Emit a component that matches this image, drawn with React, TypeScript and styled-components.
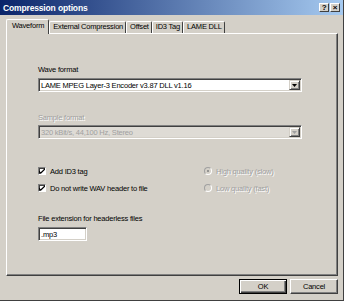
import React from 'react'
import styled, { createGlobalStyle, css } from 'styled-components'

const GlobalStyle = createGlobalStyle`
  html, body {
    margin: 0;
    padding: 0;
    background: #d4d0c8;
  }
  body {
    font-family: 'Liberation Sans', Arial, sans-serif;
    font-size: 7.5px;
    letter-spacing: -0.2px;
    color: #000;
  }
`

const Window = styled.div`
  width: 344px;
  height: 301px;
  box-sizing: border-box;
  background: #d4d0c8;
  border-right: 1px solid #404040;
  border-bottom: 1px solid #404040;
  display: flex;
  flex-direction: column;
`

const TitleBar = styled.div`
  height: 15px;
  flex: none;
  display: flex;
  align-items: center;
  justify-content: space-between;
  padding: 0 3px 0 3px;
  background: linear-gradient(to right, #0a246a, #a6caf0);
  color: #fff;
  font-weight: bold;
  font-size: 8.5px;
  letter-spacing: -0.15px;
`

const CaptionButtons = styled.div`
  display: flex;
  gap: 1px;
`

const CaptionButton = styled.div`
  width: 10px;
  height: 9px;
  box-sizing: border-box;
  background: #d4d0c8;
  border-top: 1px solid #fff;
  border-left: 1px solid #fff;
  border-right: 1px solid #404040;
  border-bottom: 1px solid #404040;
  color: #000;
  font-size: 8px;
  font-weight: bold;
  line-height: 7px;
  text-align: center;
`

const Body = styled.div`
  flex: 1;
  display: flex;
  flex-direction: column;
  padding: 4px 5px 0 6px;
`

const TabRow = styled.div`
  display: flex;
  align-items: flex-end;
  height: 14px;
  position: relative;
  z-index: 1;
`

const Tab = styled.div<{ $active?: boolean }>`
  box-sizing: border-box;
  height: 12px;
  padding: 0 2px 0 3px;
  line-height: 10px;
  background: #d4d0c8;
  border-top: 1px solid #fff;
  border-left: 1px solid #fff;
  border-right: 1px solid #404040;
  border-radius: 2px 2px 0 0;
  white-space: nowrap;
  ${(p) =>
    p.$active &&
    css`
      height: 15px;
      margin-bottom: -1px;
      padding: 0 4px 0 5px;
      line-height: 12px;
    `}
`

const Panel = styled.div`
  flex: none;
  height: 243px;
  box-sizing: border-box;
  border-top: 1px solid #fff;
  border-left: 1px solid #fff;
  border-right: 1px solid #404040;
  border-bottom: 1px solid #404040;
  box-shadow: inset -1px -1px 0 #808080;
  padding: 31px 0 0 31px;
  display: flex;
  flex-direction: column;
  align-items: flex-start;
`

const Label = styled.div<{ $disabled?: boolean; $gap?: number }>`
  line-height: 10px;
  height: 10px;
  margin-top: ${(p) => p.$gap ?? 0}px;
  ${(p) =>
    p.$disabled &&
    css`
      color: #a0a0a0;
      text-shadow: 1px 1px 0 #fff;
    `}
`

const Sunken = styled.div<{ $disabled?: boolean; $width: number; $gap?: number }>`
  box-sizing: border-box;
  width: ${(p) => p.$width}px;
  height: 14px;
  margin-top: ${(p) => p.$gap ?? 0}px;
  border-top: 1px solid #808080;
  border-left: 1px solid #808080;
  border-right: 1px solid #fff;
  border-bottom: 1px solid #fff;
  box-shadow: inset 1px 1px 0 #404040, inset -1px -1px 0 #d4d0c8;
  background: ${(p) => (p.$disabled ? '#dedbd5' : '#fff')};
  color: ${(p) => (p.$disabled ? '#a0a0a0' : '#000')};
  display: flex;
  align-items: center;
  padding-left: 2px;
  white-space: nowrap;
`

const SelectText = styled.span`
  flex: 1;
`

const DropButton = styled.div<{ $disabled?: boolean }>`
  width: 11px;
  height: 10px;
  margin-right: 1px;
  box-sizing: border-box;
  background: #d4d0c8;
  border-top: 1px solid #d4d0c8;
  border-left: 1px solid #d4d0c8;
  border-right: 1px solid #404040;
  border-bottom: 1px solid #404040;
  box-shadow: inset 1px 1px 0 #fff, inset -1px -1px 0 #808080;
  display: flex;
  align-items: center;
  justify-content: center;
  color: ${(p) => (p.$disabled ? '#a0a0a0' : '#000')};
`

const Options = styled.div`
  display: grid;
  grid-template-columns: 166px auto;
  row-gap: 7px;
  margin-top: 27px;
`

const Option = styled.div<{ $disabled?: boolean }>`
  display: flex;
  align-items: center;
  gap: 4px;
  height: 10px;
  white-space: nowrap;
  ${(p) =>
    p.$disabled &&
    css`
      color: #a0a0a0;
      text-shadow: 1px 1px 0 #fff;
    `}
`

const CheckBox = styled.div`
  width: 8px;
  height: 8px;
  box-sizing: border-box;
  background: #fff;
  border-top: 1px solid #808080;
  border-left: 1px solid #808080;
  border-right: 1px solid #fff;
  border-bottom: 1px solid #fff;
  box-shadow: inset 1px 1px 0 #404040;
  display: flex;
  align-items: center;
  justify-content: center;
`

const Radio = styled.div<{ $checked?: boolean }>`
  width: 8px;
  height: 8px;
  box-sizing: border-box;
  border-radius: 50%;
  border: 1px solid #a0a0a0;
  border-right-color: #fff;
  border-bottom-color: #fff;
  background: #d4d0c8;
  display: flex;
  align-items: center;
  justify-content: center;
  &::after {
    content: '';
    width: 2px;
    height: 2px;
    border-radius: 50%;
    background: ${(p) => (p.$checked ? '#808080' : 'transparent')};
  }
`

const Footer = styled.div`
  flex: 1;
  display: flex;
  justify-content: flex-end;
  align-items: flex-start;
  gap: 3px;
  padding-top: 3px;
`

const Button = styled.div<{ $default?: boolean }>`
  width: 48px;
  height: 15px;
  box-sizing: border-box;
  background: #d4d0c8;
  border-top: 1px solid #fff;
  border-left: 1px solid #fff;
  border-right: 1px solid #404040;
  border-bottom: 1px solid #404040;
  box-shadow: inset -1px -1px 0 #808080;
  display: flex;
  align-items: center;
  justify-content: center;
  ${(p) =>
    p.$default &&
    css`
      border: 1px solid #000;
      box-shadow: inset 1px 1px 0 #fff, inset -1px -1px 0 #404040, inset -2px -2px 0 #808080;
    `}
`

const Arrow = () => (
  <svg width="5" height="3" viewBox="0 0 5 3">
    <path d="M0 0h5L2.5 3z" fill="currentColor" />
  </svg>
)

const Check = () => (
  <svg width="6" height="6" viewBox="0 0 7 7">
    <path d="M0 3l2 2 5-5v2l-5 5-2-2z" fill="#000" />
  </svg>
)

const tabs = ['Waveform', 'External Compression', 'Offset', 'ID3 Tag', 'LAME DLL']

export default function App() {
  return (
    <>
      <GlobalStyle />
      <Window>
        <TitleBar>
          <span>Compression options</span>
          <CaptionButtons>
            <CaptionButton>?</CaptionButton>
            <CaptionButton>×</CaptionButton>
          </CaptionButtons>
        </TitleBar>
        <Body>
          <TabRow>
            {tabs.map((t, i) => (
              <Tab key={t} $active={i === 0}>
                {t}
              </Tab>
            ))}
          </TabRow>
          <Panel>
            <Label>Wave format</Label>
            <Sunken $width={264} $gap={3}>
              <SelectText>LAME MPEG Layer-3 Encoder v3.87 DLL v1.16</SelectText>
              <DropButton>
                <Arrow />
              </DropButton>
            </Sunken>
            <Label $disabled $gap={21}>
              Sample format
            </Label>
            <Sunken $disabled $width={264} $gap={2}>
              <SelectText>320 kBit/s, 44,100 Hz, Stereo</SelectText>
              <DropButton $disabled>
                <Arrow />
              </DropButton>
            </Sunken>
            <Options>
              <Option>
                <CheckBox>
                  <Check />
                </CheckBox>
                Add ID3 tag
              </Option>
              <Option $disabled>
                <Radio $checked />
                High quality (slow)
              </Option>
              <Option>
                <CheckBox>
                  <Check />
                </CheckBox>
                Do not write WAV header to file
              </Option>
              <Option $disabled>
                <Radio />
                Low quality (fast)
              </Option>
            </Options>
            <Label $gap={21}>File extension for headerless files</Label>
            <Sunken $width={49} $gap={3}>
              .mp3
            </Sunken>
          </Panel>
          <Footer>
            <Button $default>OK</Button>
            <Button>Cancel</Button>
          </Footer>
        </Body>
      </Window>
    </>
  )
}
